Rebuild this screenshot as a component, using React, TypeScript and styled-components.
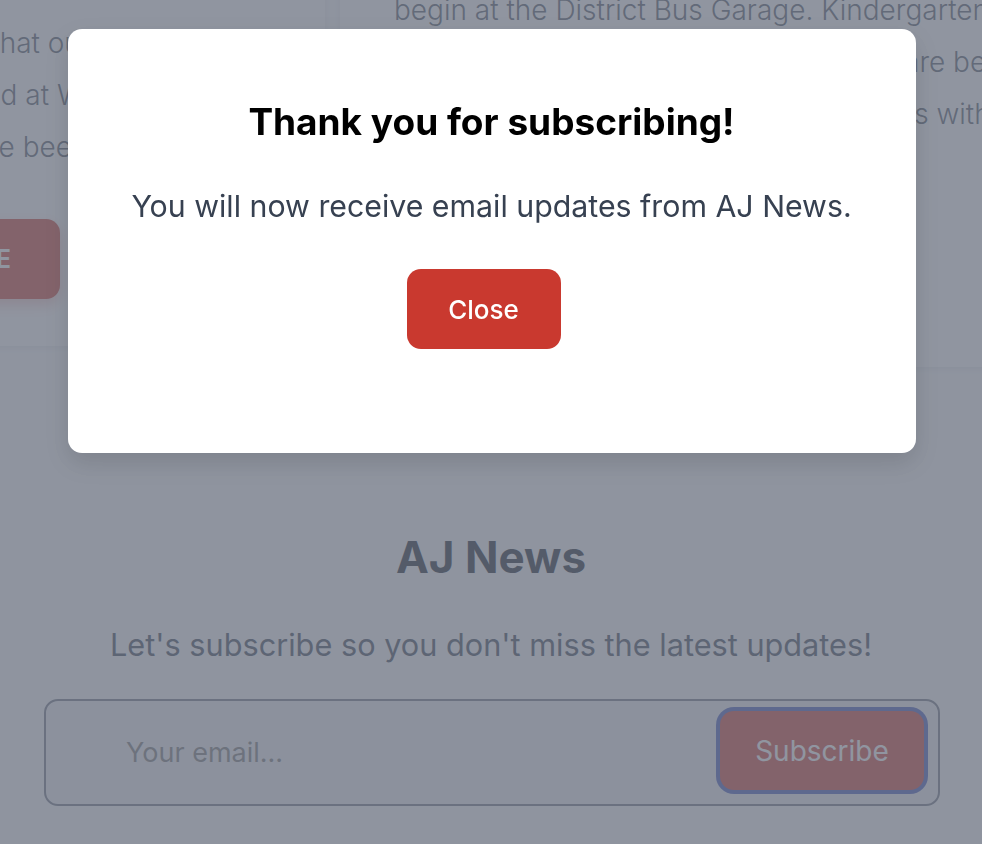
import React from "react";
import styled, { createGlobalStyle } from "styled-components";

const GlobalStyle = createGlobalStyle`
  html, body {
    margin: 0;
    padding: 0;
    background: #f9fafb;
    font-family: Inter, "Noto Sans", "Liberation Sans", sans-serif;
    overflow: hidden;
  }
  * {
    box-sizing: border-box;
  }
`;

const leftLines = [
  "Bus routes for the new school",
  "year are now posted online.",
  "Please review the route map.",
  "Hello,",
  "We confirm that our buses",
  "to be dropped at Wilson",
  "All stops have been checked",
];

const rightLines = [
  "All families should check the list",
  "of stops for their neighborhood and",
  "arrive early on the first day. Routes",
  "begin at the District Bus Garage. Kindergarten",
  "new pick-up times for all the bus stops are being updated.",
  "The schedules will be sent to all students with",
];

const App: React.FC = () => {
  return (
    <>
      <GlobalStyle />
      <Page>
        <CardsRow>
          <Card width={531} top={40} side={40}>
            <CardText>
              {leftLines.map((line) => (
                <Line key={line}>{line}</Line>
              ))}
            </CardText>
            <ReadMore gap={46}>Read More</ReadMore>
          </Card>
          <Card width={700} top={59} side={54}>
            <CardText>
              {rightLines.map((line) => (
                <Line key={line}>{line}</Line>
              ))}
            </CardText>
            <ReadMore gap={100}>Read More</ReadMore>
          </Card>
        </CardsRow>

        <Newsletter>
          <Brand>AJ News</Brand>
          <Tagline>Let's subscribe so you don't miss the latest updates!</Tagline>
          <Form>
            <EmailInput placeholder="Your email..." />
            <SubscribeButton type="button">Subscribe</SubscribeButton>
          </Form>
        </Newsletter>
      </Page>

      <Overlay>
        <Modal>
          <ModalTitle>Thank you for subscribing!</ModalTitle>
          <ModalText>You will now receive email updates from AJ News.</ModalText>
          <CloseButton type="button">Close</CloseButton>
        </Modal>
      </Overlay>
    </>
  );
};

export default App;

const Page = styled.div`
  width: 982px;
  height: 844px;
  overflow: hidden;
`;

const CardsRow = styled.div`
  display: flex;
  align-items: flex-start;
  gap: 15px;
  margin-top: -231px;
  margin-left: -206px;
`;

const Card = styled.div<{ width: number; top: number; side: number }>`
  flex: none;
  width: ${(p) => p.width}px;
  padding: ${(p) => p.top}px ${(p) => p.side}px 47px;
  background: #ffffff;
  border-radius: 0 0 12px 12px;
  box-shadow: 0 2px 6px rgba(17, 24, 39, 0.08);
  overflow: hidden;
`;

const CardText = styled.div`
  color: #4b5563;
  font-size: 28px;
  font-weight: 300;
  line-height: 52px;
`;

const Line = styled.div`
  white-space: nowrap;
`;

const ReadMore = styled.button<{ gap: number }>`
  display: block;
  margin-top: ${(p) => p.gap}px;
  width: 226px;
  height: 80px;
  padding: 0 48px 0 0;
  border: none;
  border-radius: 14px;
  background: #c9392f;
  color: #ffffff;
  font-family: inherit;
  font-size: 25px;
  font-weight: 700;
  letter-spacing: 1px;
  text-align: right;
  text-transform: uppercase;
  box-shadow: 0 6px 14px rgba(201, 57, 47, 0.3);
`;

const Newsletter = styled.section`
  display: flex;
  flex-direction: column;
  align-items: center;
  padding-top: 164px;
`;

const Brand = styled.h2`
  margin: 0;
  color: #111827;
  font-size: 44px;
  font-weight: 700;
  line-height: 52px;
`;

const Tagline = styled.p`
  margin: 40px 0 0;
  color: #374151;
  font-size: 30.7px;
  line-height: 44px;
`;

const Form = styled.div`
  display: flex;
  align-items: center;
  width: 896px;
  height: 107px;
  margin-top: 32px;
  margin-left: 2px;
  padding: 0 14px 0 78px;
  border: 2px solid #6b7280;
  border-radius: 14px;
  background: #eef0f3;
`;

const EmailInput = styled.input`
  flex: 1;
  min-width: 0;
  border: none;
  background: transparent;
  outline: none;
  font-family: inherit;
  font-size: 27px;
  color: #111827;

  ::placeholder {
    color: #9ca3af;
  }
`;

const SubscribeButton = styled.button`
  width: 204px;
  height: 79px;
  margin-top: -4px;
  border: none;
  border-radius: 14px;
  background: #c9392f;
  color: #ffffff;
  font-family: inherit;
  font-size: 28px;
  font-weight: 400;
  box-shadow: 0 0 0 4px #3b4fb8;
`;

const Overlay = styled.div`
  position: fixed;
  inset: 0;
  display: flex;
  justify-content: center;
  align-items: flex-start;
  padding: 29px 0 0 1px;
  background: rgba(107, 114, 128, 0.75);
`;

const Modal = styled.div`
  display: flex;
  flex-direction: column;
  align-items: center;
  width: 848px;
  height: 424px;
  padding-top: 70px;
  background: #ffffff;
  border-radius: 14px;
  box-shadow: 0 10px 25px rgba(0, 0, 0, 0.12);
`;

const ModalTitle = styled.h3`
  margin: 0;
  color: #000000;
  font-size: 37px;
  font-weight: 700;
  line-height: 46px;
`;

const ModalText = styled.p`
  margin: 39px 0 0;
  color: #374151;
  font-size: 30.3px;
  line-height: 44px;
`;

const CloseButton = styled.button`
  width: 154px;
  height: 80px;
  margin: 41px 16px 0 0;
  border: none;
  border-radius: 14px;
  background: #c9392f;
  color: #ffffff;
  font-family: inherit;
  font-size: 26px;
  font-weight: 500;
`;
